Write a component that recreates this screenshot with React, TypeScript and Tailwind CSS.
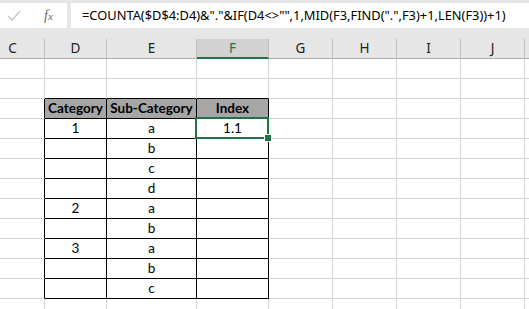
import React from "react";

const cols = [
  { k: "C", w: 64 },
  { k: "D", w: 62 },
  { k: "E", w: 90 },
  { k: "F", w: 72 },
  { k: "G", w: 64 },
  { k: "H", w: 64 },
  { k: "I", w: 64 },
  { k: "J", w: 64 },
  { k: "", w: 64 },
];

// rows 1..13 ; table header is row 3, data rows 4..12
const data: Record<number, string[]> = {
  3: ["Category", "Sub-Category", "Index"],
  4: ["1", "a", "1.1"],
  5: ["", "b", ""],
  6: ["", "c", ""],
  7: ["", "d", ""],
  8: ["2", "a", ""],
  9: ["", "b", ""],
  10: ["3", "a", ""],
  11: ["", "b", ""],
  12: ["", "c", ""],
};

const inTable = (r: number) => r >= 3 && r <= 12;
const tableCol = (c: number) => c >= 1 && c <= 3;

export default function App() {
  const rows = Array.from({ length: 13 }, (_, i) => i + 1);
  return (
    <div
      className="w-[529px] h-[309px] overflow-hidden bg-white"
      style={{ fontFamily: "Lato, 'Noto Sans', sans-serif" }}
    >
      {/* formula bar */}
      <div className="h-[39px] bg-[#e6e6e6] flex items-start pt-[3px] gap-[4px]">
        <div className="w-[67px] h-[25px] bg-white flex items-center">
          <svg width="14" height="11" viewBox="0 0 14 11" className="ml-[7px]">
            <path d="M1 6 L5 10 L13 1" fill="none" stroke="#c8c8c8" strokeWidth="1.6" />
          </svg>
          <span
            className="ml-[23px] text-[14px] italic text-[#6a6a6a] leading-none"
            style={{ fontFamily: "'Liberation Serif', serif" }}
          >
            f<span className="text-[11px]">x</span>
          </span>
        </div>
        <div
          className="flex-1 h-[25px] bg-white flex items-center pl-[11px] text-[12.85px] text-black whitespace-nowrap overflow-hidden"
          style={{ fontFamily: "'Noto Sans', 'Open Sans', sans-serif" }}
        >
          =COUNTA($D$4:D4)&amp;"."&amp;IF(D4&lt;&gt;"",1,MID(F3,FIND(".",F3)+1,LEN(F3))+1)
        </div>
      </div>
      {/* column headers */}
      <div className="flex ml-[-19px] h-[20px]">
        {cols.map((c, i) => (
          <div
            key={i}
            style={{ width: c.w, fontFamily: "'Noto Sans', 'Open Sans', sans-serif" }}
            className={
              c.k === "F"
                ? "shrink-0 bg-[#d2d2d2] border-r border-r-[#bfbfbf] border-b-2 border-b-[#217346] flex items-center justify-center text-[13.5px] text-[#217346]"
                : "shrink-0 bg-[#e6e6e6] border-r border-r-[#bfbfbf] border-b border-b-[#ababab] flex items-center justify-center text-[13.5px] text-[#222]"
            }
          >
            {c.k}
          </div>
        ))}
      </div>
      {/* grid */}
      {rows.map((r) => (
        <div key={r} className="flex ml-[-19px] h-[20px]">
          {cols.map((c, ci) => {
            const blackB = tableCol(ci) && (inTable(r) || r === 2);
            const blackR = inTable(r) && ci >= 0 && ci <= 3;
            const hdr = r === 3 && tableCol(ci);
            const txt = data[r] && tableCol(ci) ? data[r][ci - 1] : "";
            const selected = r === 4 && ci === 3;
            return (
              <div
                key={ci}
                style={{ width: c.w }}
                className={[
                  "shrink-0 relative flex items-center justify-center border-r border-b text-[13.5px] leading-none",
                  blackB ? "border-b-black" : "border-b-[#d4d4d4]",
                  blackR ? "border-r-black" : "border-r-[#d4d4d4]",
                  hdr ? "bg-[#a6a6a6] font-bold text-black" : "text-black",
                ].join(" ")}
              >
                {txt}
                {selected && (
                  <div className="absolute left-[-2px] top-[-2px] right-[-1px] bottom-[-1px] border-2 border-[#217346] z-10">
                    <div className="absolute right-[-4px] bottom-[-4px] w-[6px] h-[6px] bg-[#217346] outline outline-1 outline-white" />
                  </div>
                )}
              </div>
            );
          })}
        </div>
      ))}
    </div>
  );
}
